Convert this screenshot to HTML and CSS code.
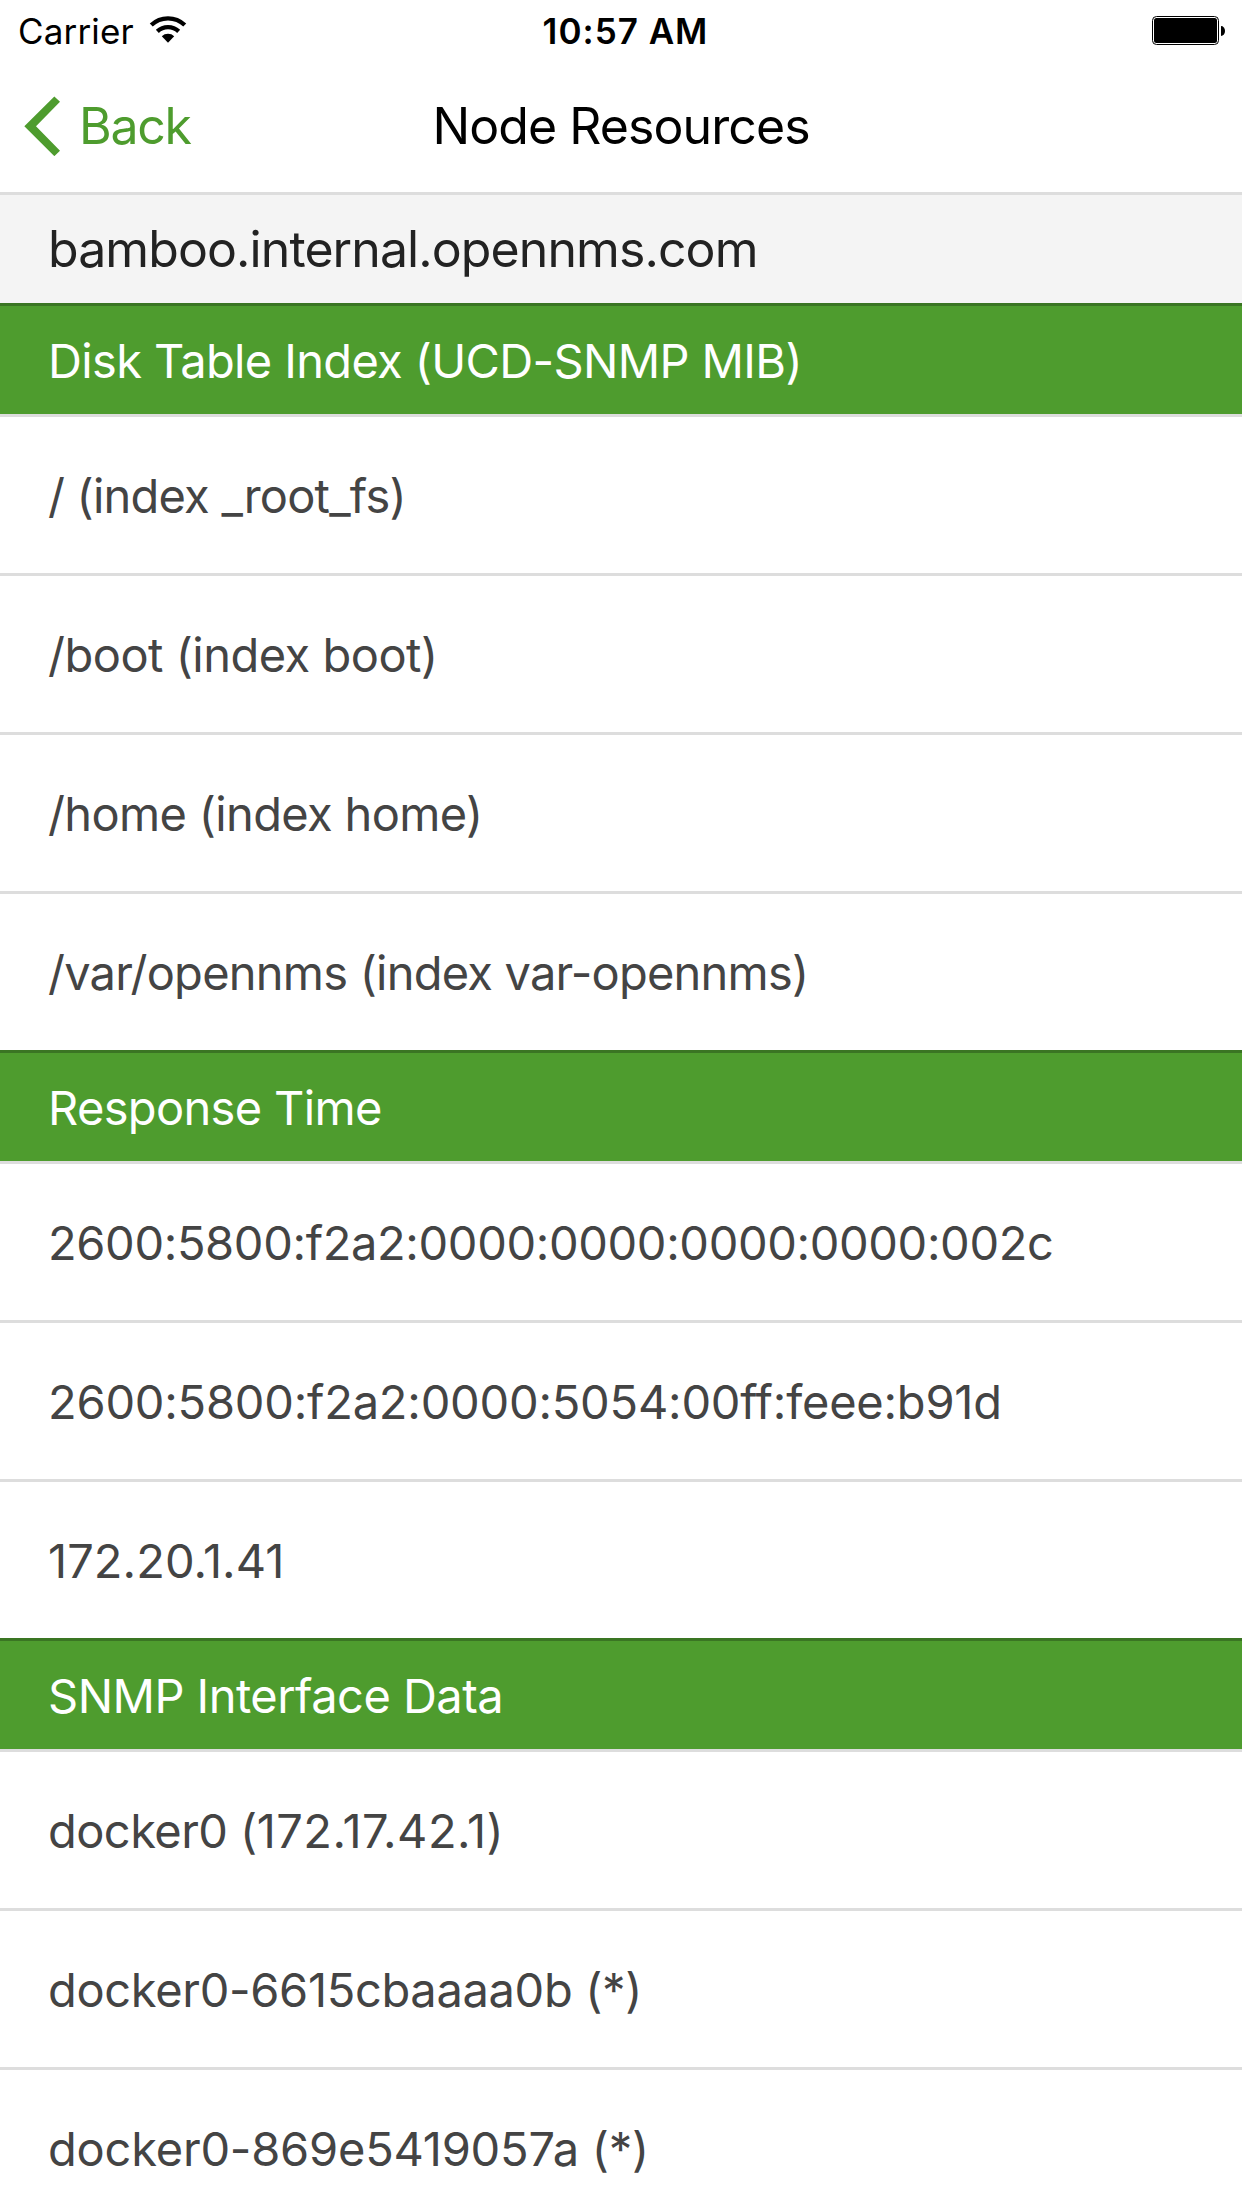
FILE: index.html
```html
<!DOCTYPE html>
<html lang="en">
<head>
<meta charset="utf-8">
<title>Node Resources</title>
<link rel="stylesheet" href="styles.css">
</head>
<body>
<div class="status">
  <div class="carrier"><span class="t-carrier">Carrier</span>
    <svg class="wifi" width="38" height="32" viewBox="0 1 114 96"><path d="M57 84L38.4 64.4A27 27 0 0 1 75.6 64.4Z"/><path class="arc" d="M25 50.3A46.5 46.5 0 0 1 89 50.3M6.8 31.1A73 73 0 0 1 107.2 31.1"/></svg>
  </div>
  <div class="time"><span class="t-time">10:57 AM</span></div>
  <svg class="battery" width="74" height="30" viewBox="0 0 74 30"><rect class="shell" x="0.5" y="0.5" width="66" height="28" rx="4"/><rect x="2" y="2" width="63" height="25" rx="2.5"/><path d="M69 10a4 5 0 0 1 0 10z"/></svg>
</div>
<header class="nav">
  <div class="back"><svg class="chevron" width="36" height="60" viewBox="72 286.5 108 180"><path d="M73 377L163 288L180 304L108 377L180 451L163 467Z"/></svg><span class="t-back">Back</span></div>
  <h1 class="title"><span class="t-title">Node Resources</span></h1>
</header>
<main class="list">
  <div class="node"><span class="t-node">bamboo.internal.opennms.com</span></div>
  <h2 class="divider"><span class="t-disk">Disk Table Index (UCD-SNMP MIB)</span></h2>
  <div class="item"><span class="t-root">/ (index _root_fs)</span></div>
  <div class="item"><span class="t-boot">/boot (index boot)</span></div>
  <div class="item"><span class="t-home">/home (index home)</span></div>
  <div class="item last"><span class="t-var">/var/opennms (index var-opennms)</span></div>
  <h2 class="divider"><span class="t-response">Response Time</span></h2>
  <div class="item"><span class="t-ip1">2600:5800:f2a2:0000:0000:0000:0000:002c</span></div>
  <div class="item"><span class="t-ip2">2600:5800:f2a2:0000:5054:00ff:feee:b91d</span></div>
  <div class="item last"><span class="t-ip3">172.20.1.41</span></div>
  <h2 class="divider"><span class="t-snmp">SNMP Interface Data</span></h2>
  <div class="item"><span class="t-d0">docker0 (<span class="address">172.17.42.1)</span></span></div>
  <div class="item"><span class="t-d1">docker0-6615cbaaaa0b (*)</span></div>
  <div class="item"><span class="t-d2">docker0-869e5419057a (*)</span></div>
</main>
</body>
</html>
```

FILE: styles.css
```css
* { box-sizing: border-box; }
body { margin: 0; width: 1242px; height: 2208px; overflow: hidden; background: #fff; color: #000; font-family: Inter, "Liberation Sans", sans-serif; }
span { white-space: nowrap; }

/* Status bar */
.status { height: 60px; display: grid; grid-template-columns: 1fr auto 1fr; align-items: center; padding: 2px 16px 0 18px; font-size: 35px; }
.carrier { display: flex; align-items: center; gap: 15px; }
.t-carrier { width: 116px; letter-spacing: 0.15px; }
.arc { fill: none; stroke: #000; stroke-width: 13; }
.time { padding-left: 7px; font-weight: 600; }
.t-time { letter-spacing: 1px; }
.battery { justify-self: end; }
.shell { fill: none; stroke: #000; stroke-width: 1; }

/* Navigation bar */
.nav { height: 132px; display: grid; grid-template-columns: 1fr auto 1fr; align-items: center; padding: 0 24px; }
.back { display: flex; align-items: center; gap: 19px; color: #4e9c2e; font-size: 50px; }
.t-back { letter-spacing: -1.25px; }
.chevron { fill: #4e9c2e; }
.title { margin: 0; font-size: 50px; font-weight: 400; }
.t-title { letter-spacing: -0.92px; }

/* Resource list */
.list { border-top: 3px solid #ddd; }
.node { height: 108px; padding: 0 48px; display: flex; align-items: center; background: #f4f4f4; color: #222; font-size: 50px; }
.divider { height: 114px; margin: 0; padding: 1px 48px 0; border-top: 3px solid #3a7523; border-bottom: 3px solid #ddd; display: flex; align-items: center; background: #4e9c2e; color: #fff; font-size: 47px; font-weight: 400; }
.item { height: 159px; padding: 1px 48px 0; border-bottom: 3px solid #ddd; display: flex; align-items: center; color: #444; font-size: 47px; }
.last { height: 156px; border-bottom: 0; }

/* Tracking per label */
.t-node { letter-spacing: -0.91px; }
.t-disk { letter-spacing: -0.64px; }
.t-root { letter-spacing: -0.78px; }
.t-boot { letter-spacing: -0.5px; }
.t-home { letter-spacing: -0.65px; }
.t-var { letter-spacing: -0.77px; }
.t-response { letter-spacing: -0.66px; }
.t-ip1 { letter-spacing: -0.35px; }
.t-ip2 { letter-spacing: -0.21px; }
.t-ip3 { letter-spacing: 0.06px; }
.t-snmp { letter-spacing: -0.53px; }
.t-d0 { letter-spacing: -0.55px; }
.t-d1 { letter-spacing: -0.33px; }
.t-d2 { letter-spacing: -0.21px; }
.address { letter-spacing: 0.45px; }
```
